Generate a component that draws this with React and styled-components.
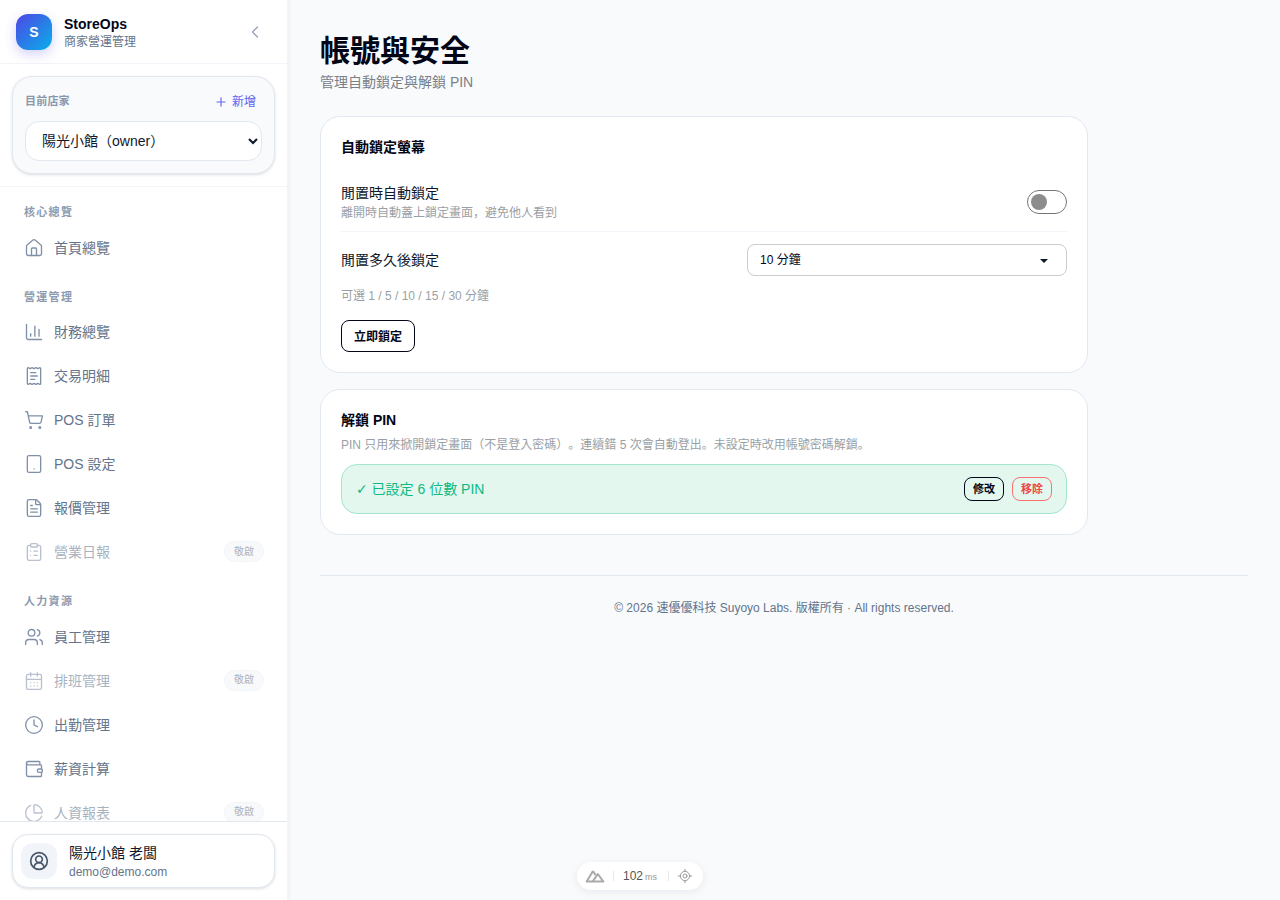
import React from 'react';
import styled, { createGlobalStyle } from 'styled-components';
import {
  ChevronLeft, Plus, House, ChartColumn, ReceiptText, ShoppingCart, Tablet, FileText, ClipboardList,
  Users, CalendarDays, Clock, Wallet, ChartPie, CircleUserRound, LocateFixed,
} from 'lucide-react';

const FONT = '"Liberation Sans", "Noto Sans CJK JP", sans-serif';

const Global = createGlobalStyle`
  * { box-sizing: border-box; text-spacing-trim: space-all; }
  html, body { margin: 0; padding: 0; height: 100%; }
  body { font-family: ${FONT}; background: #f8fafc; color: #0f172a; overflow: hidden; }
`;

const Shell = styled.div`display: flex; height: 900px; position: relative; overflow: hidden;`;
const Sidebar = styled.aside`
  width: 288px; height: 900px; flex: none; display: flex; flex-direction: column; background: #fff;
  border-right: 1px solid #f1f5f9; box-shadow: 1px 0 4px rgba(15, 23, 42, .06);
`;
const Brand = styled.div`height: 64px; flex: none; display: flex; align-items: center; padding: 0 16px; border-bottom: 1px solid #f1f5f9; gap: 12px;`;
const Logo = styled.div`
  width: 36px; height: 36px; border-radius: 12px; background: linear-gradient(135deg, #4f46e5, #0ea5e9 90%);
  color: #fff; font-weight: 700; font-size: 14px; display: flex; align-items: center; justify-content: center;
  box-shadow: 0 4px 12px rgba(79, 70, 229, .25);
`;
const BrandText = styled.div`flex: 1; min-width: 0; display: flex; flex-direction: column;`;
const BrandName = styled.div`font-size: 14px; font-weight: 700; line-height: 20px; color: #020617;`;
const BrandSub = styled.div`font-size: 12px; line-height: 16px; color: #64748b;`;
const Collapse = styled.button`width: 32px; height: 32px; border: 0; background: none; padding: 0; color: #94a3b8; display: flex; align-items: center; justify-content: center;`;

const StoreSection = styled.div`flex: none; padding: 12px; border-bottom: 1px solid #f1f5f9;`;
const StoreCard = styled.div`
  height: 98px; border-radius: 20px; background: #f8fafc; border: 1px solid #e2e8f0; padding: 12px;
  box-shadow: 0 1px 3px rgba(15, 23, 42, .14);
`;
const StoreHead = styled.div`display: flex; justify-content: space-between; align-items: center; height: 24px; margin-bottom: 8px;`;
const StoreLabel = styled.div`font-size: 11px; line-height: 16px; font-weight: 600; color: #8a97ab; letter-spacing: .2px;`;
const AddStore = styled.button`
  border: 0; background: none; padding: 2px 6px 0 0; display: flex; align-items: center; gap: 4px; color: #6366f1;
  font: 12px/16px ${FONT};
`;
const StoreSelect = styled.select`
  display: block; width: 100%; height: 40px; border-radius: 14px; border: 1px solid #e2e8f0; background: #fff;
  padding: 0 12px; font: 14px ${FONT}; color: #0f172a; text-spacing-trim: space-all;
`;

const Nav = styled.nav`flex: 1; min-height: 0; overflow: hidden; padding: 14px 12px 0;`;
const Group = styled.div`margin-bottom: 16px;`;
const GroupLabel = styled.div`font-size: 11px; font-weight: 600; color: #8d9bb0; letter-spacing: 1.3px; line-height: 16.5px; padding: 3px 0 5px 12px;`;
const Item = styled.div`
  display: flex; align-items: center; height: 44px; padding: 0 12px; gap: 10px; font-size: 14px; color: #64748b;
  opacity: ${p => (p.$muted ? 0.55 : 1)};
  svg { color: #8090a8; flex: none; }
`;
const ItemText = styled.span`flex: 1; line-height: 20px;`;
const Badge = styled.span`
  width: 40px; height: 21px; border-radius: 999px; background: #f1f5f9; border: 1px solid #e8edf3; font-size: 10px; line-height: 14px; color: #64748b;
  display: flex; align-items: center; justify-content: center; margin-right: -1px; margin-top: -1px;
`;
const UserSection = styled.div`flex: none; height: 79px; border-top: 1px solid #e2e8f0; padding: 12px;`;
const UserCard = styled.div`
  height: 54px; border-radius: 16px; background: #fff; border: 1px solid #e2e8f0; display: flex; align-items: center;
  padding: 0 8px; gap: 12px; box-shadow: 0 1px 3px rgba(15, 23, 42, .14);
`;
const Avatar = styled.div`width: 36px; height: 36px; border-radius: 12px; background: #f1f5f9; color: #475569; display: flex; align-items: center; justify-content: center;`;
const UserName = styled.div`font-size: 14px; line-height: 20px; color: #0f172a;`;
const UserMail = styled.div`font-size: 12px; line-height: 16px; margin-top: 1px; color: #64748b;`;

const Main = styled.main`flex: 1; min-width: 0; padding: 33px 32px 0;`;
const Title = styled.h1`margin: 0; font-size: 30px; line-height: 36px; font-weight: 700; color: #020617;`;
const Subtitle = styled.p`margin: 3px 0 0; font-size: 14px; line-height: 20px; color: #7b8088;`;
const Card = styled.section`
  width: 768px; background: #fff; border: 1px solid #e2e8f0; border-radius: 20px; padding: 20px; margin-top: ${p => p.$top}px;
`;
const CardTitle = styled.h2`margin: 0; font-size: 14px; line-height: 20px; font-weight: 700; color: #020617;`;
const SettingRow = styled.div`
  display: flex; align-items: center; justify-content: space-between;
  ${p => p.$divider ? 'border-bottom: 1px solid #f1f5f9;' : ''}
  height: ${p => p.$h}px; margin-top: ${p => p.$mt || 0}px;
`;
const SettingName = styled.div`font-size: 14px; line-height: 20px; color: #0f172a;`;
const SettingDesc = styled.div`font-size: 12px; line-height: 16px; margin-top: 2px; color: #9a9fa6;`;
const Toggle = styled.div`
  width: 40px; height: 24px; border-radius: 999px; border: 1px solid #767676; background: #fff; padding: 3px; display: flex; align-items: center;
`;
const Knob = styled.div`width: 16px; height: 16px; border-radius: 50%; background: #8c8c8c;`;
const Dropdown = styled.div`
  width: 320px; height: 32px; border: 1px solid #ccc; border-radius: 8px; padding: 0 18px 0 12px; background: #fff;
  display: flex; align-items: center; justify-content: space-between; font-size: 12px; line-height: 16px; color: #020617;
`;
const Caret = styled.span`width: 0; height: 0; margin-top: 1px; border-left: 4px solid transparent; border-right: 4px solid transparent; border-top: 4px solid #0f172a;`;
const Hint = styled.div`font-size: 12px; line-height: 16px; color: #9a9fa6;`;
const OutlineBtn = styled.button`
  display: flex; align-items: center; justify-content: center; background: #fff; border: 1px solid #020617; border-radius: 8px; color: #020617;
  font: 700 12px/16px ${FONT}; width: 74px; height: 32px; margin-top: 16px; padding: 2px 0 0;
`;
const Desc = styled.p`margin: 6px 0 0; font-size: 12px; line-height: 18px; color: #9a9fa6;`;
const PinStatus = styled.div`
  margin-top: 10px; height: 50px; border-radius: 16px; background: #e3f7ef; border: 1px solid #a3e6cd; padding: 0 14px;
  display: flex; align-items: center; justify-content: space-between;
`;
const PinText = styled.span`font-size: 14px; line-height: 20px; color: #10b981;`;
const Check = styled.span`font-family: "DejaVu Sans", sans-serif;`;
const PinActions = styled.div`display: flex; gap: 8px;`;
const SmallBtn = styled.button`
  width: 40px; height: 24px; padding: 0; border-radius: 8px; background: transparent; border: 1px solid ${p => p.$danger ? '#f87171' : '#020617'};
  color: ${p => p.$danger ? '#ef4444' : '#020617'}; font: 700 11px/14px ${FONT};
`;
const Footer = styled.footer`
  margin-top: 40px; border-top: 1px solid #e2e8f0; padding-top: 24px; text-align: center; font-size: 12px; line-height: 16px; color: #64748b;
  width: 928px;
`;
const DevPill = styled.div`
  position: absolute; left: 577px; top: 862px; width: 126px; height: 28px; border-radius: 14px; background: #fff;
  box-shadow: 0 2px 8px rgba(15, 23, 42, .07); display: flex; align-items: center; padding-left: 8px; color: #555;
`;
const Sep = styled.span`width: 1px; height: 10px; background: #e5e7eb; margin: ${p => p.$m};`;
const Ms = styled.span`width: 35px; font-size: 12px; color: #555; display: flex; align-items: baseline; gap: 2px; small { font-size: 9px; color: #999; }`;

const groups = [
  ['核心總覽', [[House, '首頁總覽']]],
  ['營運管理', [
    [ChartColumn, '財務總覽'], [ReceiptText, '交易明細'], [ShoppingCart, 'POS 訂單'], [Tablet, 'POS 設定'], [FileText, '報價管理'],
    [ClipboardList, '營業日報', true],
  ]],
  ['人力資源', [
    [Users, '員工管理'], [CalendarDays, '排班管理', true], [Clock, '出勤管理'], [Wallet, '薪資計算'], [ChartPie, '人資報表', true],
  ]],
];

function NuxtMark() {
  return (
    <svg width="20" height="14" viewBox="0 0 20 14" fill="none" stroke="#aaa" strokeWidth="2" strokeLinejoin="round">
      <path d="M8 2 1.7 12.6h5.6M8 2l2.6 4.2" />
      <path d="M12.8 5 7.6 12.6h10.8z" />
    </svg>
  );
}

export default function App() {
  return (
    <Shell>
      <Global />
      <Sidebar>
        <Brand>
          <Logo>S</Logo>
          <BrandText>
            <BrandName>StoreOps</BrandName>
            <BrandSub>商家營運管理</BrandSub>
          </BrandText>
          <Collapse><ChevronLeft size={20} strokeWidth={1.5} /></Collapse>
        </Brand>
        <StoreSection>
          <StoreCard>
            <StoreHead>
              <StoreLabel>目前店家</StoreLabel>
              <AddStore><Plus size={14} strokeWidth={2} />新增</AddStore>
            </StoreHead>
            <StoreSelect defaultValue="a"><option value="a">陽光小館（owner）</option></StoreSelect>
          </StoreCard>
        </StoreSection>
        <Nav>
          {groups.map(([label, items]) => (
            <Group key={label}>
              <GroupLabel>{label}</GroupLabel>
              {items.map(([Icon, text, muted]) => (
                <Item key={text} $muted={muted}>
                  <Icon size={20} strokeWidth={1.6} />
                  <ItemText>{text}</ItemText>
                  {muted && <Badge>敬啟</Badge>}
                </Item>
              ))}
            </Group>
          ))}
        </Nav>
        <UserSection>
          <UserCard>
            <Avatar><CircleUserRound size={20} strokeWidth={2} /></Avatar>
            <div>
              <UserName>陽光小館 老闆</UserName>
              <UserMail>demo@demo.com</UserMail>
            </div>
          </UserCard>
        </UserSection>
      </Sidebar>
      <Main>
        <Title>帳號與安全</Title>
        <Subtitle>管理自動鎖定與解鎖 PIN</Subtitle>
        <Card $top={24}>
          <CardTitle>自動鎖定螢幕</CardTitle>
          <SettingRow $divider $h={59} $mt={16}>
            <div>
              <SettingName>閒置時自動鎖定</SettingName>
              <SettingDesc>離開時自動蓋上鎖定畫面，避免他人看到</SettingDesc>
            </div>
            <Toggle><Knob /></Toggle>
          </SettingRow>
          <SettingRow $h={56}>
            <SettingName>閒置多久後鎖定</SettingName>
            <Dropdown>10 分鐘<Caret /></Dropdown>
          </SettingRow>
          <Hint>可選 1 / 5 / 10 / 15 / 30 分鐘</Hint>
          <OutlineBtn>立即鎖定</OutlineBtn>
        </Card>
        <Card $top={16}>
          <CardTitle>解鎖 PIN</CardTitle>
          <Desc>PIN 只用來掀開鎖定畫面（不是登入密碼）。連續錯 5 次會自動登出。未設定時改用帳號密碼解鎖。</Desc>
          <PinStatus>
            <PinText><Check>✓</Check> 已設定 6 位數 PIN</PinText>
            <PinActions>
              <SmallBtn>修改</SmallBtn>
              <SmallBtn $danger>移除</SmallBtn>
            </PinActions>
          </PinStatus>
        </Card>
        <Footer>© 2026 速優優科技 Suyoyo Labs. 版權所有 · All rights reserved.</Footer>
      </Main>
      <DevPill>
        <NuxtMark />
        <Sep $m="0 9px 0 8px" />
        <Ms>102<small>ms</small></Ms>
        <Sep $m="0 8px 0 10px" />
        <LocateFixed size={16} strokeWidth={1.5} color="#999" />
      </DevPill>
    </Shell>
  );
}
